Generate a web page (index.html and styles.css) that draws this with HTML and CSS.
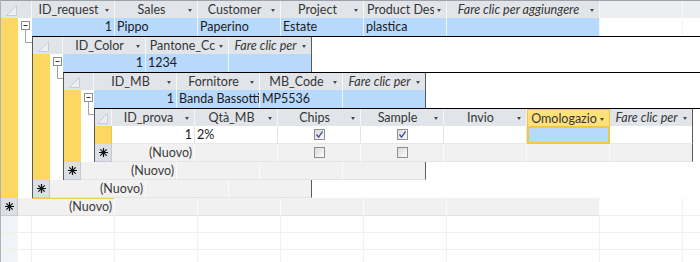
FILE: index.html
```html
<!DOCTYPE html>
<html lang="it">
<head>
    <meta charset="UTF-8">
    <title>Richieste</title>
    <link rel="stylesheet" href="styles.css">
</head>

<body>

<div class="sheet">

    <!-- richieste -->
    <div class="row head">
        <div class="sel corner"><svg width="11" height="11" viewBox="0 0 11 11"><path d="M10.5 0.5V10.5H0.5Z" fill="#eceef1" stroke="#c9ccd1"/></svg></div>
        <div class="th"><span>ID_request</span><i></i></div>
        <div class="th"><span>Sales</span><i></i></div>
        <div class="th"><span>Customer</span><i></i></div>
        <div class="th"><span>Project</span><i></i></div>
        <div class="th"><span>Product Des</span><i></i></div>
        <div class="th wide add"><span>Fare clic per aggiungere</span><i></i></div>
        <div class="th fill"></div>
        <div class="th fill"></div>
    </div>

    <div class="row rec cur">
        <div class="sel"><b class="mark"></b><span class="tree"><svg width="13" height="18"><rect x="3.5" y="3.5" width="8" height="8" fill="#fff" stroke="#8d8d8d"/><path d="M5.5 7.5H9.5" stroke="#333"/><path d="M7.5 12V18" stroke="#a3a3a3"/></svg></span></div>
        <div class="c num">1</div>
        <div class="c">Pippo</div>
        <div class="c">Paperino</div>
        <div class="c">Estate</div>
        <div class="c">plastica</div>
        <div class="c wide"></div>
        <div class="c fill"></div>
        <div class="c fill"></div>
    </div>

    <div class="sub">
        <div class="sel"><b class="mark"></b><span class="tree"><svg width="14" height="7"><path d="M7.5 0V6.5H14" fill="none" stroke="#a3a3a3"/></svg></span></div>

        <!-- colori -->
        <div class="level">
            <div class="row head">
                <div class="sel corner"><svg width="11" height="11" viewBox="0 0 11 11"><path d="M10.5 0.5V10.5H0.5Z" fill="#eceef1" stroke="#c9ccd1"/></svg></div>
                <div class="th"><span>ID_Color</span><i></i></div>
                <div class="th"><span>Pantone_Cc</span><i></i></div>
                <div class="th add"><span>Fare clic per</span><i></i></div>
            </div>

            <div class="row rec cur">
                <div class="sel"><b class="mark"></b><span class="tree"><svg width="13" height="18"><rect x="3.5" y="3.5" width="8" height="8" fill="#fff" stroke="#8d8d8d"/><path d="M5.5 7.5H9.5" stroke="#333"/><path d="M7.5 12V18" stroke="#a3a3a3"/></svg></span></div>
                <div class="c num">1</div>
                <div class="c">1234</div>
                <div class="c"></div>
            </div>

            <div class="sub">
                <div class="sel"><b class="mark"></b><span class="tree"><svg width="13" height="7"><path d="M7.5 0V6.5H13" fill="none" stroke="#a3a3a3"/></svg></span></div>

                <!-- masterbatch -->
                <div class="level">
                    <div class="row head">
                        <div class="sel corner"><svg width="11" height="11" viewBox="0 0 11 11"><path d="M10.5 0.5V10.5H0.5Z" fill="#eceef1" stroke="#c9ccd1"/></svg></div>
                        <div class="th"><span>ID_MB</span><i></i></div>
                        <div class="th"><span>Fornitore</span><i></i></div>
                        <div class="th"><span>MB_Code</span><i></i></div>
                        <div class="th add"><span>Fare clic per</span><i></i></div>
                    </div>

                    <div class="row rec cur">
                        <div class="sel"><b class="mark"></b><span class="tree"><svg width="13" height="18"><rect x="3.5" y="3.5" width="8" height="8" fill="#fff" stroke="#8d8d8d"/><path d="M5.5 7.5H9.5" stroke="#333"/><path d="M7.5 12V18" stroke="#a3a3a3"/></svg></span></div>
                        <div class="c num">1</div>
                        <div class="c">Banda Bassotti</div>
                        <div class="c">MP5536</div>
                        <div class="c"></div>
                    </div>

                    <div class="sub">
                        <div class="sel"><b class="mark"></b><span class="tree"><svg width="13" height="7"><path d="M7.5 0V6.5H13" fill="none" stroke="#a3a3a3"/></svg></span></div>

                        <!-- prove -->
                        <div class="level last">
                            <div class="row head">
                                <div class="sel corner"><svg width="11" height="11" viewBox="0 0 11 11"><path d="M10.5 0.5V10.5H0.5Z" fill="#eceef1" stroke="#c9ccd1"/></svg></div>
                                <div class="th"><span>ID_prova</span><i></i></div>
                                <div class="th"><span>Qtà_MB</span><i></i></div>
                                <div class="th"><span>Chips</span><i></i></div>
                                <div class="th"><span>Sample</span><i></i></div>
                                <div class="th"><span>Invio</span><i></i></div>
                                <div class="th focus"><span>Omologazio</span><i></i></div>
                                <div class="th add"><span>Fare clic per</span><i></i></div>
                            </div>

                            <div class="row rec">
                                <div class="sel"><b class="mark"></b></div>
                                <div class="c num">1</div>
                                <div class="c">2%</div>
                                <div class="c cb"><span class="box"><svg width="9" height="9"><path d="M1.5 4.5L3.6 7.2L7.6 1.4" fill="none" stroke="#3b4d98" stroke-width="1.3"/></svg></span></div>
                                <div class="c cb"><span class="box"><svg width="9" height="9"><path d="M1.5 4.5L3.6 7.2L7.6 1.4" fill="none" stroke="#3b4d98" stroke-width="1.3"/></svg></span></div>
                                <div class="c"></div>
                                <div class="c focus"></div>
                                <div class="c"></div>
                            </div>

                            <div class="row rec new">
                                <div class="sel"><b class="star"><svg width="9" height="9"><path d="M4.5 0V9M0 4.5H9M1.3 1.3L7.7 7.7M7.7 1.3L1.3 7.7" stroke="#111" stroke-width="1.2"/></svg></b></div>
                                <div class="c num">(Nuovo)</div>
                                <div class="c"></div>
                                <div class="c cb"><span class="box"></span></div>
                                <div class="c cb"><span class="box"></span></div>
                                <div class="c"></div>
                                <div class="c"></div>
                                <div class="c"></div>
                            </div>
                        </div>
                    </div>

                    <div class="row rec new">
                        <div class="sel"><b class="star"><svg width="9" height="9"><path d="M4.5 0V9M0 4.5H9M1.3 1.3L7.7 7.7M7.7 1.3L1.3 7.7" stroke="#111" stroke-width="1.2"/></svg></b><span class="tree"></span></div>
                        <div class="c num">(Nuovo)</div>
                        <div class="c"></div>
                        <div class="c"></div>
                        <div class="c"></div>
                    </div>
                </div>
            </div>

            <div class="row rec new">
                <div class="sel"><b class="star"><svg width="9" height="9"><path d="M4.5 0V9M0 4.5H9M1.3 1.3L7.7 7.7M7.7 1.3L1.3 7.7" stroke="#111" stroke-width="1.2"/></svg></b><span class="tree"></span></div>
                <div class="c num">(Nuovo)</div>
                <div class="c"></div>
                <div class="c"></div>
            </div>
        </div>
    </div>

    <div class="row rec new">
        <div class="sel"><b class="star"><svg width="9" height="9"><path d="M4.5 0V9M0 4.5H9M1.3 1.3L7.7 7.7M7.7 1.3L1.3 7.7" stroke="#111" stroke-width="1.2"/></svg></b><span class="tree"></span></div>
        <div class="c num hint">(Nuovo)</div>
        <div class="c"></div>
        <div class="c"></div>
        <div class="c"></div>
        <div class="c"></div>
        <div class="c wide"></div>
        <div class="c fill"></div>
        <div class="c fill"></div>
    </div>

    <!-- empty area below the records -->
    <div class="row blank"><div class="sel"></div><div class="c"></div><div class="c"></div><div class="c"></div><div class="c"></div><div class="c"></div><div class="c wide"></div><div class="c"></div><div class="c"></div></div>
    <div class="row blank"><div class="sel"></div><div class="c"></div><div class="c"></div><div class="c"></div><div class="c"></div><div class="c"></div><div class="c wide"></div><div class="c"></div><div class="c"></div></div>
    <div class="row blank"><div class="sel"></div><div class="c"></div><div class="c"></div><div class="c"></div><div class="c"></div><div class="c"></div><div class="c wide"></div><div class="c"></div><div class="c"></div></div>

</div>

</body>
</html>
```

FILE: styles.css
```css
body {
    margin:     0;
    background: #fff;
    font-family: Lato, "Open Sans", sans-serif;
    font-size:  12.5px;
    color:      #1c1c1c;
}

.sheet {
    width:      700px;
    height:     262px;
    overflow:   hidden;
    box-sizing: border-box;
    border-left: 1px solid #aeb1b6;
}

.row {
    display:    flex;
    height:     18px;
    box-sizing: border-box;
}
.sheet > .head {
    border-top: 1px solid #9ea2a8;
}
.level > .head {
    height:     17px;
}

/* record selector column */
.sel {
    flex:       none;
    width:      30px;
    display:    flex;
    box-sizing: border-box;
}
.sheet > .row > .sel,
.sheet > .sub > .sel {
    width:      31px;
}
.last .sel {
    width:      17px;
}
.mark {
    flex:       none;
    width:      17px;
    background: #fcd862;
}
.last .mark {
    border-right: 1px solid #e8c656;
    box-sizing: border-box;
}
.tree {
    flex:       1;
    background: #fff;
}
.tree svg {
    display:    block;
    overflow:   visible;
}
.star {
    flex:       none;
    width:      17px;
    display:    grid;
    place-items: center;
    background: #dcdfe4;
    border-right: 1px solid #c6cad0;
    border-bottom: 1px solid #c6cad0;
    box-sizing: border-box;
}
.new .tree {
    background: #f1f1f1;
    border-bottom: 1px solid #e6e4dd;
}

/* header cells */
.corner {
    background: #e1e4e8;
    border-right: 1px solid #f6f7f8;
    padding:    4px 0 0 5px;
}
.last .corner {
    padding-left: 2px;
}
.th {
    flex:       none;
    width:      83px;
    box-sizing: border-box;
    display:    flex;
    align-items: center;
    padding:    0 5px 0 3px;
    background: #e1e4e8;
    border-right: 1px solid #f6f7f8;
    color:      #363636;
    white-space: nowrap;
    overflow:   hidden;
}
.th span {
    flex:       1;
    text-align: center;
    overflow:   hidden;
}
.th i {
    flex:       none;
    width:      0;
    height:     0;
    margin:     2px 0 0 3px;
    border-style: solid;
    border-width: 3px 2.5px 0;
    border-color: #4a4a4a transparent transparent;
}
.th.add span {
    font-style: italic;
}
.th.focus {
    background: #fde27c;
    border: 1px solid #eec244;
    border-bottom: none;
}
.th.fill {
    background: #eceef2;
    border-right-color: #fafafa;
}
.th.fill i {
    display:    none;
}

/* data cells */
.c {
    flex:       none;
    width:      83px;
    box-sizing: border-box;
    padding:    0 0 0 2px;
    line-height: 17px;
    border-right: 1px solid #e4e4e4;
    border-bottom: 1px solid #e8e8e8;
    white-space: nowrap;
    overflow:   hidden;
}
.wide {
    width:      153px;
}
.num {
    text-align: right;
    padding:    0 2px 0 0;
}
.c.fill {
    border-right-color: #f1efe9;
    border-bottom-color: #f1efe9;
}

.cur .c {
    background: #b7d9fc;
    border-right-color: #eef4fb;
    border-bottom: none;
}
.cur .c.fill {
    background: #fff;
}
.c.focus {
    background: #b7d9fc;
    border: 2px solid #f2c744;
}

.new .c {
    background: #f1f1f1;
    border-right-color: #fbfbfb;
    border-bottom-color: #e6e4dd;
    color:      #3a3a3a;
}
.new .c.fill {
    background: #fff;
    border-color: #f3f1eb;
}
.new .hint {
    box-shadow: inset 0 1px #f0cb55;
}

.level .row > .c:last-child,
.level .row > .th:last-child {
    border-right: 1px solid #5a5a5a;
}

/* checkboxes */
.cb {
    display:    flex;
    align-items: center;
    justify-content: center;
    padding:    0;
}
.box {
    width:      11px;
    height:     11px;
    box-sizing: border-box;
    border:     1px solid #8e8f91;
    background: linear-gradient(135deg, #d9d9d9, #fdfdfd);
    display:    grid;
    place-items: center;
}
.box svg {
    display:    block;
}

/* subdatasheets */
.sub {
    display:    flex;
}
.level {
    flex:       1;
    min-width:  0;
    border-top: 1px solid #000;
    border-left: 1px solid #5a5a5a;
    background: #fff;
}

/* empty area */
.blank {
    height:     17px;
}
.blank .sel {
    background: linear-gradient(90deg, #f2f3f8 17px, #fff 17px);
    border-right: 1px solid #f1efe9;
    border-bottom: 1px solid #f1efe9;
}
.blank .c {
    border-right-color: #f3f1eb;
    border-bottom-color: #f3f1eb;
}
```
